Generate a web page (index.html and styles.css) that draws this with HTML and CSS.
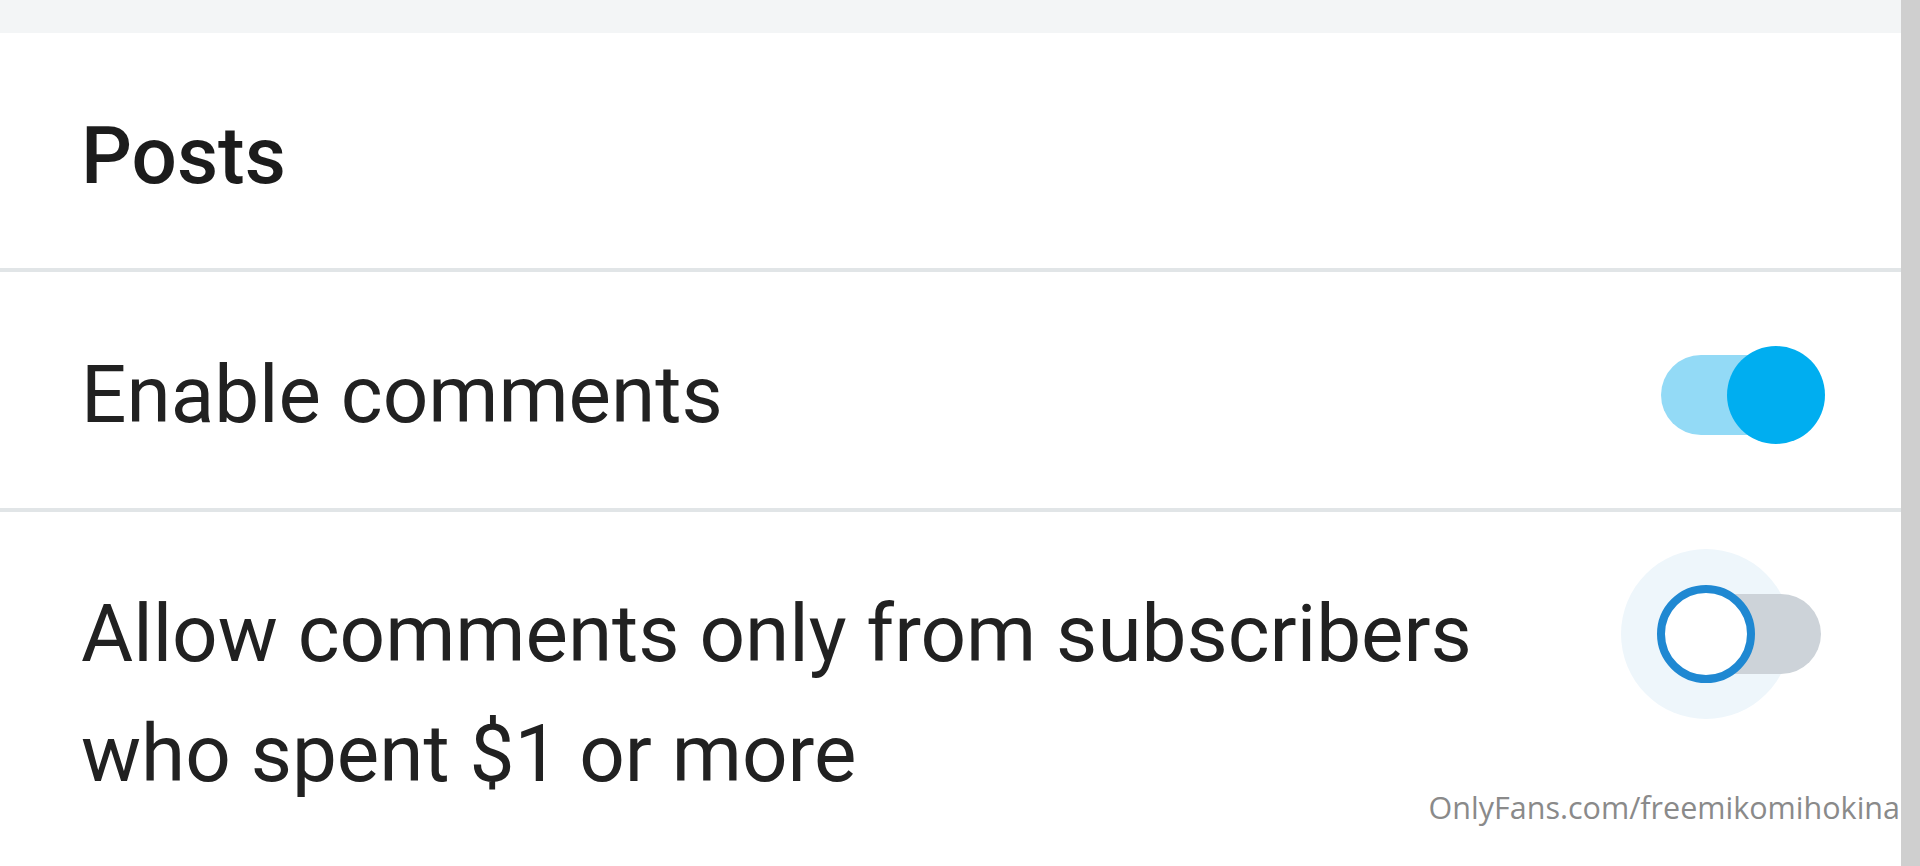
FILE: index.html
```html
<!DOCTYPE html>
<html lang="en">
<head>
<meta charset="utf-8">
<title>Posts settings</title>
<link rel="stylesheet" href="styles.css">
</head>
<body>
<div class="page">
  <main class="main">
    <div class="topband"></div>
    <section class="settings">
      <h2 class="section-title">Posts</h2>
      <div class="divider"></div>
      <div class="row row-single">
        <span class="label">Enable comments</span>
        <div class="toggle-wrap">
          <span class="toggle on"><span class="track"></span><span class="knob"></span></span>
        </div>
      </div>
      <div class="divider"></div>
      <div class="row row-multi">
        <span class="label">Allow comments only from subscribers who spent $1 or more</span>
        <div class="toggle-wrap">
          <span class="toggle off"><span class="halo"></span><span class="track"></span><span class="knob"></span></span>
        </div>
      </div>
    </section>
    <div class="watermark">OnlyFans.com/freemikomihokina</div>
  </main>
  <div class="scrollbar"></div>
</div>
</body>
</html>
```
FILE: styles.css
```css
html, body {
  margin: 0;
  padding: 0;
  background: #ffffff;
}
.page {
  display: flex;
  width: 1920px;
  height: 866px;
  overflow: hidden;
}
.main {
  position: relative;
  flex: 1;
  display: flex;
  flex-direction: column;
  font-family: Roboto, "Liberation Sans", sans-serif;
  color: #212121;
}
.topband {
  height: 33px;
  background: #f3f5f6;
}
.settings {
  display: flex;
  flex-direction: column;
}
.section-title {
  margin: 0;
  padding: 63px 0 52px 81px;
  font-size: 80px;
  line-height: 120px;
  font-weight: 500;
  color: #1c1c1c;
}
.divider {
  height: 4px;
  background: #e1e5e7;
}
.row {
  display: flex;
  padding-left: 81px;
  padding-right: 75px;
}
.row-single {
  padding-top: 63px;
  padding-bottom: 53px;
  align-items: center;
}
.row-multi {
  padding-top: 62px;
  align-items: flex-start;
}
.label {
  flex: 1;
  font-size: 80px;
  line-height: 120px;
  font-weight: 400;
  margin-right: 110px;
}
.toggle-wrap {
  width: 170px;
  height: 120px;
  display: flex;
  align-items: center;
  justify-content: center;
}
.toggle {
  position: relative;
  width: 160px;
  height: 100px;
}
.track {
  position: absolute;
  left: 0;
  top: 10px;
  width: 160px;
  height: 80px;
  border-radius: 40px;
}
.knob {
  position: absolute;
  top: 1px;
  width: 98px;
  height: 98px;
  border-radius: 50%;
  box-sizing: border-box;
}
.on .track {
  background: #93daf6;
}
.on .knob {
  left: 66px;
  background: #00aef0;
}
.off .track {
  background: #cdd3d9;
}
.off .knob {
  left: -4px;
  background: #ffffff;
  border: 8px solid #1f88d2;
}
.halo {
  position: absolute;
  left: -40px;
  top: -35px;
  width: 170px;
  height: 170px;
  border-radius: 50%;
  background: #eef6fb;
}
.watermark {
  position: absolute;
  right: 1px;
  top: 786px;
  font-family: "Open Sans", "Liberation Sans", sans-serif;
  font-size: 30.5px;
  color: #8a8a8a;
  white-space: nowrap;
}
.scrollbar {
  width: 19px;
  background: #cfcfcf;
}
```
